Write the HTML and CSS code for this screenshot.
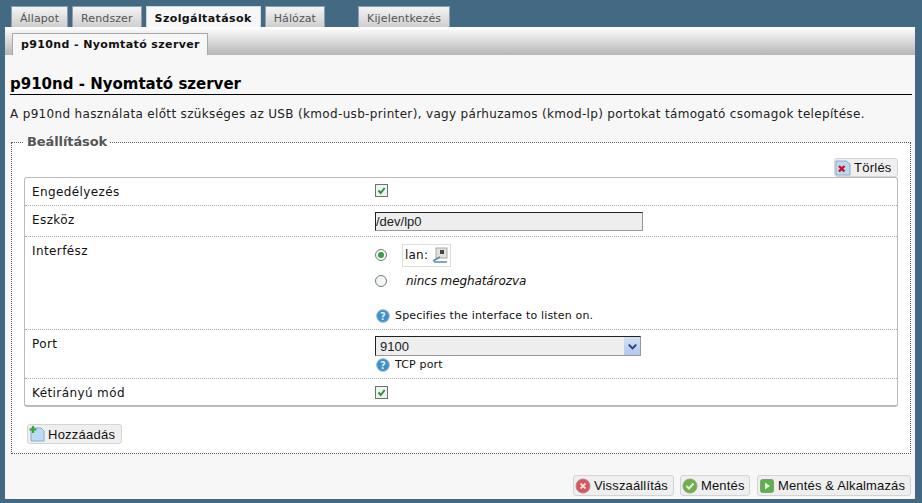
FILE: index.html
```html
<!DOCTYPE html>
<html lang="hu">
<head>
<meta charset="utf-8">
<title>p910nd - Nyomtató szerver</title>
<link rel="stylesheet" href="styles.css">
</head>
<body>
<nav class="tabs">
  <a class="tab">Állapot</a>
  <a class="tab">Rendszer</a>
  <a class="tab active">Szolgáltatások</a>
  <a class="tab">Hálózat</a>
  <a class="tab logout">Kijelentkezés</a>
</nav>
<div class="subbar"><a class="subtab">p910nd - Nyomtató szerver</a></div>
<main class="content">
  <h2 class="title">p910nd - Nyomtató szerver</h2>
  <p class="desc">A p910nd használata előtt szükséges az USB (kmod-usb-printer), vagy párhuzamos (kmod-lp) portokat támogató csomagok telepítése.</p>
  <fieldset class="settings">
    <legend>Beállítások</legend>
    <div class="remove-row">
      <button class="btn btn-small"><svg class="ico" viewBox="0 0 16 16"><path d="M1 1h10l4 3v11H1z" fill="#bcd9f2" stroke="#8fa9c4"/><path d="M4 6l5.500 5.500M9.500 6L4 11.500" stroke="#c8102e" stroke-width="2.400"/></svg>Törlés</button>
    </div>
    <div class="section">
      <div class="row r1"><div class="lbl">Engedélyezés</div><div class="val"><span class="check"><svg viewBox="0 0 11 11"><path d="M2.500 5.500l2.200 2.500 4-5" fill="none" stroke="#2f8f3a" stroke-width="2"/></svg></span></div></div>
      <div class="row r2"><div class="lbl">Eszköz</div><div class="val"><div class="field">/dev/lp0</div></div></div>
      <div class="row r3"><div class="lbl">Interfész</div><div class="val">
        <div class="opt opt1"><span class="radio on"></span><span class="iface">lan: <svg class="net" viewBox="0 0 16 16"><rect x="4" y="1" width="11" height="10" fill="#e4e1d8" stroke="#aaa"/><rect x="8" y="3" width="4" height="4" fill="#444"/><path d="M1 14l7-4M2 15h13" stroke="#5b8bb5" stroke-width="1.600"/></svg></span></div>
        <div class="opt opt2"><span class="radio"></span><em class="none">nincs meghatározva</em></div>
        <div class="help help1"><svg class="q" viewBox="0 0 14 14"><circle cx="7" cy="7" r="6.300" fill="#3f8fc9" stroke="#8db4cf"/><text x="7" y="10.500" text-anchor="middle" class="qt">?</text></svg>Specifies the interface to listen on.</div>
      </div></div>
      <div class="row r4"><div class="lbl">Port</div><div class="val">
        <div class="select"><span>9100</span><span class="arrow"><svg viewBox="0 0 14 14"><path d="M3 5l4 4 4-4" fill="none" stroke="#2b3f80" stroke-width="2.200"/></svg></span></div>
        <div class="help help2"><svg class="q" viewBox="0 0 14 14"><circle cx="7" cy="7" r="6.300" fill="#3f8fc9" stroke="#8db4cf"/><text x="7" y="10.500" text-anchor="middle" class="qt">?</text></svg>TCP port</div>
      </div></div>
      <div class="row r5"><div class="lbl">Kétirányú mód</div><div class="val"><span class="check"><svg viewBox="0 0 11 11"><path d="M2.500 5.500l2.200 2.500 4-5" fill="none" stroke="#2f8f3a" stroke-width="2"/></svg></span></div></div>
    </div>
    <button class="btn btn-add"><svg class="ico" viewBox="0 0 16 16"><path d="M2 2h10l3 3v10H2z" fill="#b9dcf6" stroke="#8fa9c4"/><path d="M4 0v7M0.500 3.500h7" stroke="#3aa53a" stroke-width="2.200"/></svg>Hozzáadás</button>
  </fieldset>
  <div class="actions">
    <button class="btn b-reset"><svg class="ico" viewBox="0 0 16 16"><circle cx="8" cy="8" r="7" fill="#d9565a" stroke="#b0888a"/><path d="M5.500 5.500l5 5M10.500 5.500l-5 5" stroke="#f6dcdc" stroke-width="1.800"/></svg>Visszaállítás</button>
    <button class="btn b-save"><svg class="ico" viewBox="0 0 16 16"><circle cx="8" cy="8" r="7" fill="#6fb04a" stroke="#8aa67c"/><path d="M4.500 8l2.500 2.500L11.500 5.500" fill="none" stroke="#e6f4dc" stroke-width="2"/></svg>Mentés</button>
    <button class="btn b-apply"><svg class="ico" viewBox="0 0 16 16"><rect x="1.500" y="1.500" width="13" height="13" rx="2" fill="#5fb04f" stroke="#7f9f78"/><path d="M6 4.500l5 3.500-5 3.500z" fill="#e4f4dc"/></svg>Mentés &amp; Alkalmazás</button>
  </div>
</main>
</body>
</html>
```
FILE: styles.css
```css
* { box-sizing: border-box; }
html, body { margin: 0; height: 100%; }
body {
  background: #446a83;
  padding: 6px 7px 4px 5px;
  font-family: "DejaVu Sans", Verdana, sans-serif;
  font-size: 12px;
  color: #111;
  height: 503px;
  overflow: hidden;
  display: flex;
  flex-direction: column;
}
.tabs { display: flex; padding-left: 6px; gap: 4px; height: 21px; align-items: flex-end; flex: none; }
.tab {
  height: 21px;
  padding: 0 8px;
  line-height: 23px;
  font-size: 11px;
  letter-spacing: 0.1px;
  color: #555;
  background: linear-gradient(#f4f4f4, #cfcfcf);
  border: 1px solid #8aa0ae;
  border-bottom: 0;
}
.tab.active { background: #f7f7f7; color: #111; font-weight: bold; border-color: #c4dbe8; letter-spacing: 0.4px; }
.tab.logout { margin-left: 29px; letter-spacing: 0.15px; }
.subbar {
  flex: none;
  height: 28px;
  padding: 6px 0 0 7px;
  background: linear-gradient(#ffffff, #b6b6b6);
}
.subtab {
  display: block;
  width: 196px;
  height: 22px;
  background: #f7f7f7;
  border: 1px solid #a9a9a9;
  border-bottom: 0;
  font-size: 11px;
  font-weight: bold;
  line-height: 21px;
  padding-left: 8px;
  letter-spacing: 0.38px;
  white-space: nowrap;
}
.content { flex: 1; background: #f7f7f7; padding: 0 3px 0 5px; }
.title {
  margin: 18px 0 0;
  height: 22px;
  font-size: 15px;
  line-height: 22px;
  font-weight: bold;
  color: #000;
  border-bottom: 1px solid #000;
  white-space: nowrap;
}
.desc { margin: 12px 0 0; height: 15px; line-height: 15px; font-size: 12px; letter-spacing: 0.335px; white-space: nowrap; color: #222; }
.settings {
  margin: 12px 0 0 1px;
  padding: 0 12px;
  width: 900px;
  height: 320px;
  background: #fff;
  border: 1px dotted #555;
  min-width: 0;
}
.settings legend {
  margin-left: 0;
  padding: 0 3px;
  font-size: 13px;
  font-weight: bold;
  color: #555;
  line-height: 16px;
  letter-spacing: -0.1px;
}
.remove-row { display: flex; justify-content: flex-end; padding-top: 8px; }
.section { width: 874px; border: 1px solid #bbb; border-radius: 3px; border-width: 1px 1px 2px 1px; height: 230px; }
.row { display: flex; border-bottom: 1px dotted #aaa; }
.row:last-child { border-bottom: 0; }
.r1 { height: 28px; }
.r2 { height: 31px; }
.r3 { height: 93px; }
.r4 { height: 49px; }
.r5 { height: 26px; }
.lbl { width: 350px; padding: 7px 0 0 7px; font-size: 12px; letter-spacing: 0.4px; line-height: 15px; flex: none; }
.val { flex: 1; position: relative; display: flex; flex-direction: column; }
.check {
  display: block; width: 13px; height: 13px; margin: 6px 0 0 0;
  border: 1px solid #64786e; background: #eef2f0;
}
.r5 .check { margin-top: 7px; }
.check svg { display: block; width: 11px; height: 11px; }
.field {
  margin-top: 6px; width: 268px; height: 19px;
  background: #eee; border: 1px solid #999; border-top-color: #222; border-left-color: #222;
  font-family: "Liberation Sans", Arial, sans-serif; font-size: 13px; line-height: 17px; color: #222;
}
.opt { display: flex; align-items: center; }
.opt1 { margin-top: 6px; height: 24px; }
.opt2 { height: 28px; }
.radio { width: 12px; height: 12px; border-radius: 50%; border: 1px solid #6f7f78; background: #f5f5f5; flex: none; display: flex; align-items: center; justify-content: center; }
.radio.on::after { content: ""; width: 6px; height: 6px; border-radius: 50%; background: #3c9c4a; }
.iface { margin-left: 15px; height: 23px; width: 49px; border: 1px solid #ddd; display: flex; align-items: center; padding-left: 2px; gap: 4px; font-size: 12px; letter-spacing: .2px; }
.net { width: 16px; height: 16px; }
.none { margin-left: 19px; font-size: 12px; letter-spacing: -.1px; }
.help { display: flex; align-items: center; font-size: 11px; letter-spacing: .17px; white-space: nowrap; }
.help1 { margin-top: 13px; height: 15px; }
.help2 { height: 15px; margin-top: 1px; }
.q { width: 14px; height: 14px; margin: 0 5px 0 1px; flex: none; }
.qt { font: bold 10px "DejaVu Sans", sans-serif; fill: #d8ecfa; }
.select {
  margin-top: 6px; width: 266px; height: 20px;
  display: flex; justify-content: space-between; align-items: center;
  background: #eee; border: 1px solid #999; border-top-color: #222; border-left-color: #222;
  font-family: "Liberation Sans", Arial, sans-serif; font-size: 13px; padding-left: 4px; color: #222;
}
.arrow { width: 16px; height: 18px; background: linear-gradient(#d2dff5, #b4c8ee); display: flex; align-items: center; justify-content: center; }
.arrow svg { width: 13px; height: 13px; }
.btn {
  display: inline-flex; align-items: center; gap: 3px;
  height: 21px; padding: 0 0 0 1px;
  background: #efefef; border: 1px solid #d4d4d4; border-radius: 3px;
  font-family: "Liberation Sans", Arial, sans-serif; font-size: 13px; color: #111; letter-spacing: .15px;
  white-space: nowrap;
}
.ico { width: 16px; height: 16px; flex: none; }
.btn-small { width: 64px; height: 19px; padding-left: 0; letter-spacing: .25px; }
.btn-add { margin: 17px 0 0 3px; width: 95px; height: 20px; letter-spacing: .25px; }
.b-reset { width: 101px; }
.b-save { width: 70px; }
.b-apply { width: 154px; margin-left: 1px; }
.actions { display: flex; justify-content: flex-end; gap: 6px; margin-top: 21px; padding-right: 1px; }
```
